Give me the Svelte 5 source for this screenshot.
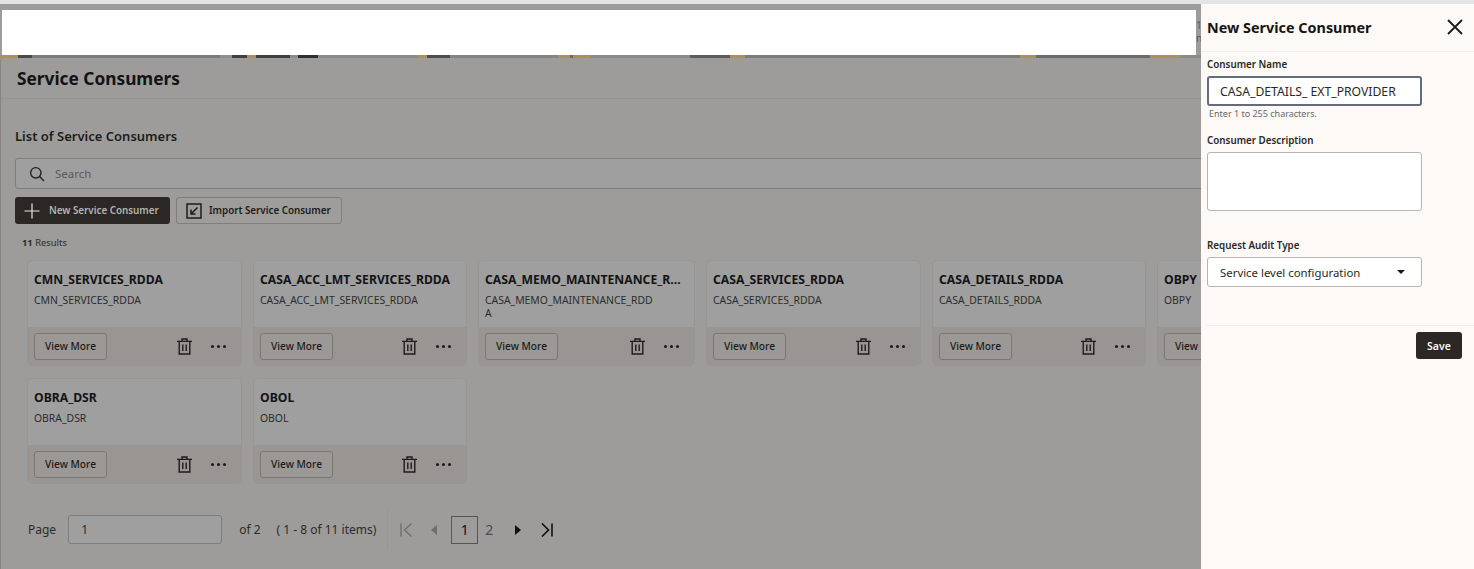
<script lang="ts">
  const rows = [
    { name: "CMN_SERVICES_RDDA", desc: "CMN_SERVICES_RDDA" },
    { name: "CASA_ACC_LMT_SERVICES_RDDA", desc: "CASA_ACC_LMT_SERVICES_RDDA" },
    { name: "CASA_MEMO_MAINTENANCE_RDDA", desc: "CASA_MEMO_MAINTENANCE_RDD A" },
    { name: "CASA_SERVICES_RDDA", desc: "CASA_SERVICES_RDDA" },
    { name: "CASA_DETAILS_RDDA", desc: "CASA_DETAILS_RDDA" },
    { name: "OBPY", desc: "OBPY" },
    { name: "OBRA_DSR", desc: "OBRA_DSR" },
    { name: "OBOL", desc: "OBOL" },
  ];
</script>

<div class="page">
  <div class="topline"></div>
  <div class="body">
    <div class="main">
      <div class="brand">
        <div class="brand-box"></div>
        <div class="brand-edge">1<br />n</div>
      </div>
      <div class="banner"></div>
      <div class="panel">
        <div class="title-bar"><h1>Service Consumers</h1></div>
        <div class="content">
          <h2>List of Service Consumers</h2>
          <div class="search">
            <svg width="16" height="16" viewBox="0 0 16 16" fill="none" stroke="#222" stroke-width="1.4">
              <circle cx="6.8" cy="6.8" r="5.2" />
              <path d="M10.6 10.6 15 15" />
            </svg>
            <span>Search</span>
          </div>
          <div class="actions">
            <button class="btn-dark">
              <svg width="16" height="16" viewBox="0 0 16 16" fill="none" stroke="#e8e6e3" stroke-width="1.2">
                <path d="M8 0.5v15M0.5 8h15" />
              </svg>
              New Service Consumer
            </button>
            <button class="btn-outline">
              <svg width="16" height="16" viewBox="0 0 16 16" fill="none" stroke="#1c1c1c" stroke-width="1.5">
                <path d="M1 1h14v14H1z" />
                <path d="M11.5 4.5 5 11M5 6.5V11h4.5" />
              </svg>
              Import Service Consumer
            </button>
          </div>
          <div class="results"><b>11</b> Results</div>
          <div class="cards">
            {#each rows as row}
              <div class="card">
                <div class="card-top">
                  <div class="card-name">{row.name}</div>
                  <div class="card-desc">{row.desc}</div>
                </div>
                <div class="card-foot">
                  <button class="btn-view">View More</button>
                  <svg class="trash" width="15" height="17" viewBox="0 0 15 17" fill="none" stroke="#1c1c1c" stroke-width="1.4">
                    <path d="M0 3.4h15M5 3.2V1h5v2.2M2.2 3.4V16h10.6V3.4M5.8 6.5v6.5M9.2 6.5v6.5" />
                  </svg>
                  <div class="dots"><i></i><i></i><i></i></div>
                </div>
              </div>
            {/each}
          </div>
          <div class="pager">
            <span class="page-label">Page</span>
            <div class="page-input">1</div>
            <span class="of">of 2</span>
            <span class="items">( 1 - 8 of 11 items)</span>
            <div class="pager-nav">
              <svg width="13" height="14" viewBox="0 0 13 14" fill="none" stroke="#6f6f6f" stroke-width="1.4">
                <path d="M1 0.5v13M11.5 0.5 4.5 7l7 6.5" />
              </svg>
              <svg class="prev" width="6" height="10" viewBox="0 0 6 10" fill="#6f6f6f"><path d="M6 0v10L0 5z" /></svg>
              <span class="num current">1</span>
              <span class="num">2</span>
              <svg class="next" width="6" height="10" viewBox="0 0 6 10" fill="#111"><path d="M0 0v10l6-5z" /></svg>
              <svg class="last" width="12" height="14" viewBox="0 0 12 14" fill="none" stroke="#111" stroke-width="1.6">
                <path d="M11 0.5v13M1 0.5l6.5 6.5L1 13.5" />
              </svg>
            </div>
          </div>
        </div>
      </div>
    </div>

    <aside class="drawer">
      <div class="drawer-head">
        <h3>New Service Consumer</h3>
        <svg width="16" height="16" viewBox="0 0 16 16" fill="none" stroke="#1a1a1a" stroke-width="1.8">
          <path d="M1 1l14 14M15 1 1 15" />
        </svg>
      </div>
      <div class="form">
        <div class="label first">Consumer Name</div>
        <div class="field focus">CASA_DETAILS_ EXT_PROVIDER</div>
        <div class="hint">Enter 1 to 255 characters.</div>
        <div class="label second">Consumer Description</div>
        <div class="field area"></div>
        <div class="label third">Request Audit Type</div>
        <div class="field select">
          Service level configuration
          <svg width="8" height="4" viewBox="0 0 8 4" fill="#1a1a1a"><path d="M0 0h8L4 4z" /></svg>
        </div>
      </div>
      <div class="drawer-foot">
        <button class="btn-save">Save</button>
      </div>
    </aside>
  </div>
</div>

<style>
  :global(body) {
    margin: 0;
    font-family: "Noto Sans", "Open Sans", sans-serif;
  }

  h1, h2, h3 {
    margin: 0;
  }

  button {
    font-family: inherit;
    cursor: pointer;
  }

  .page {
    width: 1474px;
    height: 569px;
    overflow: hidden;
    background: #9c9c9b;
    color: #1a1a1a;
  }

  .topline {
    height: 4px;
    background: #e4e4e4;
  }

  .body {
    display: flex;
    height: 565px;
  }

  .main {
    width: 1201px;
    flex: none;
    overflow: hidden;
  }

  .brand {
    display: flex;
    height: 45px;
    padding: 6px 0 0 2px;
  }

  .brand-box {
    width: 1194px;
    background: #fff;
  }

  .brand-edge {
    width: 5px;
    overflow: hidden;
    font-size: 10px;
    line-height: 13px;
    padding-top: 9px;
    color: #55585e;
  }

  .banner {
    height: 3px;
    background: linear-gradient(90deg, #a8935c 5px 18px, #4a4a48 18px 32px, #7c7c7a 32px 220px, #8f8f8c 220px 232px, #3f3f3d 232px 247px, #a8935c 247px 256px, #3f3f3d 256px 290px, #8b8b88 290px 298px, #2f2f2d 298px 318px, #8b8b88 318px 417px, #a8935c 417px 427px, #4d4d4b 427px 450px, #848482 450px 558px, #a8935c 558px 570px, #6b6b69 570px 573px, #a8935c 573px 590px, #8b8b88 590px 690px, #5d5d5b 690px 730px, #a8935c 730px 745px, #7c7c7a 745px 1020px, #a8935c 1020px 1036px, #6b6b69 1036px 1150px, #a8935c 1150px 1180px, #8b8b88 1180px);
  }

  .panel {
    height: 511px;
    border-left: 1px solid #858585;
    border-top-left-radius: 4px;
    background: #9d9c9a;
  }

  .title-bar {
    height: 40px;
    display: flex;
    align-items: center;
    padding-left: 16px;
    border-bottom: 1px solid #949492;
  }

  h1 {
    font-size: 17.3px;
    font-weight: 700;
    color: #131313;
  }

  .content {
    padding-left: 14px;
  }

  h2 {
    font-size: 13px;
    font-weight: 600;
    line-height: 20px;
    padding-top: 27px;
    color: #1c1c1c;
  }

  .search {
    display: flex;
    align-items: center;
    gap: 10px;
    height: 29px;
    margin-top: 12px;
    margin-right: -10px;
    padding-left: 13px;
    border: 1px solid #7e7e7e;
    border-radius: 3px;
    background: #9f9f9f;
    font-size: 11.5px;
    color: #5a5a5a;
  }

  .actions {
    display: flex;
    gap: 6px;
    margin-top: 8px;
  }

  .actions button {
    display: flex;
    align-items: center;
    height: 27px;
    border-radius: 3px;
    font-size: 9.8px;
    font-weight: 600;
    white-space: nowrap;
  }

  .btn-dark {
    width: 155px;
    gap: 9px;
    padding: 0 0 0 9px;
    background: #2b2725;
    border: none;
    color: #b5b3b0;
  }

  .btn-outline {
    width: 166px;
    gap: 7px;
    padding: 0 0 0 9px;
    background: #9e9d9b;
    border: 1px solid #7e7e7e;
    color: #1c1c1c;
  }

  .results {
    margin: 11px 0 0 7px;
    height: 15px;
    line-height: 15px;
    font-size: 9.4px;
    color: #2c2c2c;
  }

  .cards {
    display: grid;
    grid-template-columns: 213px 212px 215px 213px 212px 213px;
    gap: 14px 13px;
    margin: 11px 0 0 13px;
    width: 1400px;
  }

  .card {
    height: 104px;
    border-radius: 4px;
    overflow: hidden;
    background: #9f9f9f;
    outline: 1px solid #979694;
  }

  .card-top {
    height: 66px;
    padding: 10px 12px 0 6px;
    box-sizing: border-box;
  }

  .card-name {
    font-size: 12.2px;
    font-weight: 700;
    line-height: 17px;
    color: #141414;
    white-space: nowrap;
    overflow: hidden;
    text-overflow: ellipsis;
  }

  .card-desc {
    font-size: 10.4px;
    line-height: 13px;
    margin-top: 6px;
    width: 172px;
    word-break: break-all;
    color: #2c2c2c;
  }

  .card-foot {
    display: flex;
    align-items: center;
    height: 38px;
    padding: 0 15px 0 6px;
    background: #989592;
  }

  .btn-view {
    width: 73px;
    height: 27px;
    padding: 0;
    border: 1px solid #7a7875;
    border-radius: 3px;
    background: #9b9895;
    font-size: 10.2px;
    font-weight: 500;
    color: #1c1c1c;
  }

  .trash {
    margin-left: auto;
  }

  .dots {
    display: flex;
    gap: 3px;
    margin-left: 19px;
  }

  .dots i {
    width: 3px;
    height: 3px;
    border-radius: 50%;
    background: #1c1c1c;
  }

  .pager {
    display: flex;
    align-items: center;
    height: 29px;
    margin-top: 32px;
    margin-left: 13px;
    font-size: 12px;
    color: #2c2c2c;
  }

  .page-input {
    width: 140px;
    height: 27px;
    line-height: 27px;
    margin-left: 12px;
    padding-left: 12px;
    border: 1px solid #7e7e7e;
    border-radius: 3px;
    background: #9f9f9f;
  }

  .of {
    margin-left: 17px;
  }

  .items {
    margin-left: 16px;
  }

  .pager-nav {
    display: flex;
    align-items: center;
    height: 40px;
    margin-left: 11px;
    padding-left: 12px;
    border-left: 1px solid #969694;
  }

  .prev {
    margin-left: 18px;
  }

  .num {
    width: 22px;
    height: 26px;
    line-height: 26px;
    text-align: center;
    font-size: 14px;
    color: #494c55;
  }

  .num.current {
    width: 25px;
    margin-left: 14px;
    border: 1px solid #555;
    color: #111;
  }

  .next {
    margin-left: 15px;
  }

  .last {
    margin-left: 20px;
  }

  .drawer {
    width: 273px;
    flex: none;
    background: #fdf9f6;
    box-sizing: border-box;
    padding-left: 6px;
  }

  .drawer-head {
    display: flex;
    align-items: center;
    justify-content: space-between;
    height: 46px;
    padding: 0 11px 1px 6px;
    margin-left: -6px;
    border-bottom: 1px solid #f1ecea;
  }

  h3 {
    font-size: 14.4px;
    font-weight: 700;
    color: #161513;
  }

  .form {
    width: 215px;
  }

  .label {
    font-size: 9.8px;
    font-weight: 600;
    line-height: 14px;
    color: #2a2826;
  }

  .label.first {
    margin-top: 6px;
  }

  .label.second {
    margin-top: 14px;
  }

  .label.third {
    margin-top: 28px;
  }

  .field {
    display: flex;
    align-items: center;
    box-sizing: border-box;
    height: 30px;
    margin-top: 4px;
    padding-left: 12px;
    border: 1px solid #b8b4b0;
    border-radius: 3px;
    background: #fff;
    font-size: 11.4px;
    color: #2a2826;
  }

  .field.focus {
    border: 2px solid #656b7c;
    padding-left: 11px;
    font-size: 12.2px;
  }

  .field.area {
    height: 59px;
  }

  .field.select {
    justify-content: space-between;
    padding-right: 16px;
  }

  .hint {
    font-size: 9px;
    line-height: 12px;
    margin: 2px 0 0 2px;
    color: #6a6866;
  }

  .drawer-foot {
    display: flex;
    justify-content: flex-end;
    margin-top: 38px;
    padding: 6px 12px 0 0;
    border-top: 1px solid #f1ecea;
  }

  .btn-save {
    width: 46px;
    height: 27px;
    padding: 0;
    border: none;
    border-radius: 3px;
    background: #2b2725;
    color: #f5f3f1;
    font-size: 10.5px;
    font-weight: 600;
  }
</style>
